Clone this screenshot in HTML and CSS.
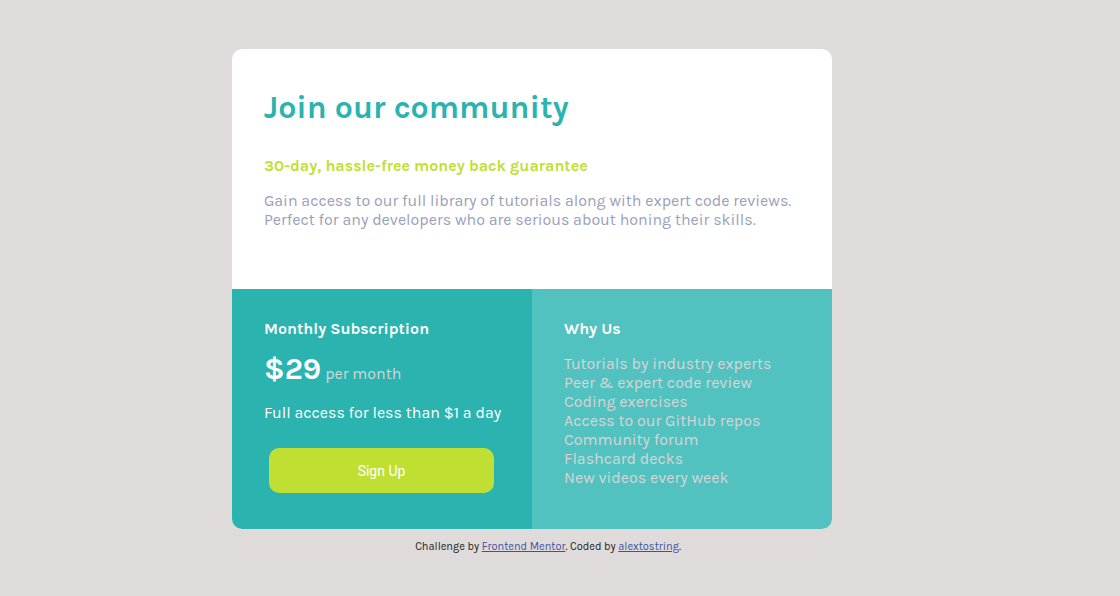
FILE: index.html
```html
<!DOCTYPE html>
<html lang="en">
<head>
<meta charset="utf-8">
<meta name="viewport" content="width=device-width, initial-scale=1">
<title>Join our community</title>
<link rel="stylesheet" href="styles.css">
</head>
<body>
<main class="page">
  <div class="card">
    <section class="intro">
      <h1 class="title">Join our community</h1>
      <h2 class="guarantee">30-day, hassle-free money back guarantee</h2>
      <p class="lead">Gain access to our full library of tutorials along with expert code reviews. Perfect for any developers who are serious about honing their skills.</p>
    </section>
    <section class="panel plan">
      <h2 class="heading">Monthly Subscription</h2>
      <p class="price"><strong class="amount">$29</strong><span class="period">per month</span></p>
      <p class="offer">Full access for less than $1 a day</p>
      <button class="signup" type="button">Sign Up</button>
    </section>
    <section class="panel why">
      <h2 class="heading">Why Us</h2>
      <ul class="reasons">
        <li>Tutorials by industry experts</li>
        <li>Peer &amp; expert code review</li>
        <li>Coding exercises</li>
        <li>Access to our GitHub repos</li>
        <li>Community forum</li>
        <li>Flashcard decks</li>
        <li>New videos every week</li>
      </ul>
    </section>
  </div>
</main>
<footer class="attribution">Challenge by <a href="#">Frontend Mentor</a>. Coded by <a href="#">alextostring</a>.</footer>
</body>
</html>
```
FILE: styles.css
```css
* { box-sizing: border-box; }
body {
  margin: 0;
  padding: 49px 24px 24px 0;
  background: #dfdbda;
  font-family: Karla, Inter, "Liberation Sans", sans-serif;
  font-size: 16px;
  line-height: 19px;
}
h1, h2, p, ul { margin: 0; }
.page { padding-right: 32px; }
.card {
  display: grid;
  grid-template-columns: 1fr 1fr;
  max-width: 600px;
  margin: 0 auto;
  border-radius: 10px;
  overflow: hidden;
  background: #fff;
}
.intro { grid-column: 1 / -1; padding: 40px 32px 60px; }
.title { color: #2ab3af; font-size: 32px; line-height: 38px; font-weight: 700; }
.guarantee { margin-top: 29px; color: #bfdf32; font-size: 16px; font-weight: 700; }
.lead { margin-top: 16px; color: #9aa1b9; }
.panel { padding: 30px 28px 36px 32px; }
.plan { background: #2ab3af; color: #fff; }
.why { background: #52c2c0; color: #fff; }
.heading { font-size: 16px; font-weight: 700; }
.price { display: flex; align-items: baseline; gap: 4px; margin-top: 13px; line-height: 36px; }
.amount { font-size: 30px; }
.period { color: #d5d5d5; }
.offer { margin-top: 11px; }
.signup {
  display: block;
  width: 225px;
  max-width: 100%;
  height: 45px;
  margin: 26px 0 0 5px;
  border: 0;
  border-radius: 10px;
  background: #bfdf32;
  color: #fff;
  font-family: Roboto, "Liberation Sans", sans-serif;
  font-size: 14px;
}
.reasons { margin-top: 16px; padding: 0; list-style: none; color: #d5d5d5; }
.attribution { margin-top: 11px; text-align: center; font-size: 11px; line-height: 14px; color: #222; }
.attribution a { color: #3e52a3; }
```
